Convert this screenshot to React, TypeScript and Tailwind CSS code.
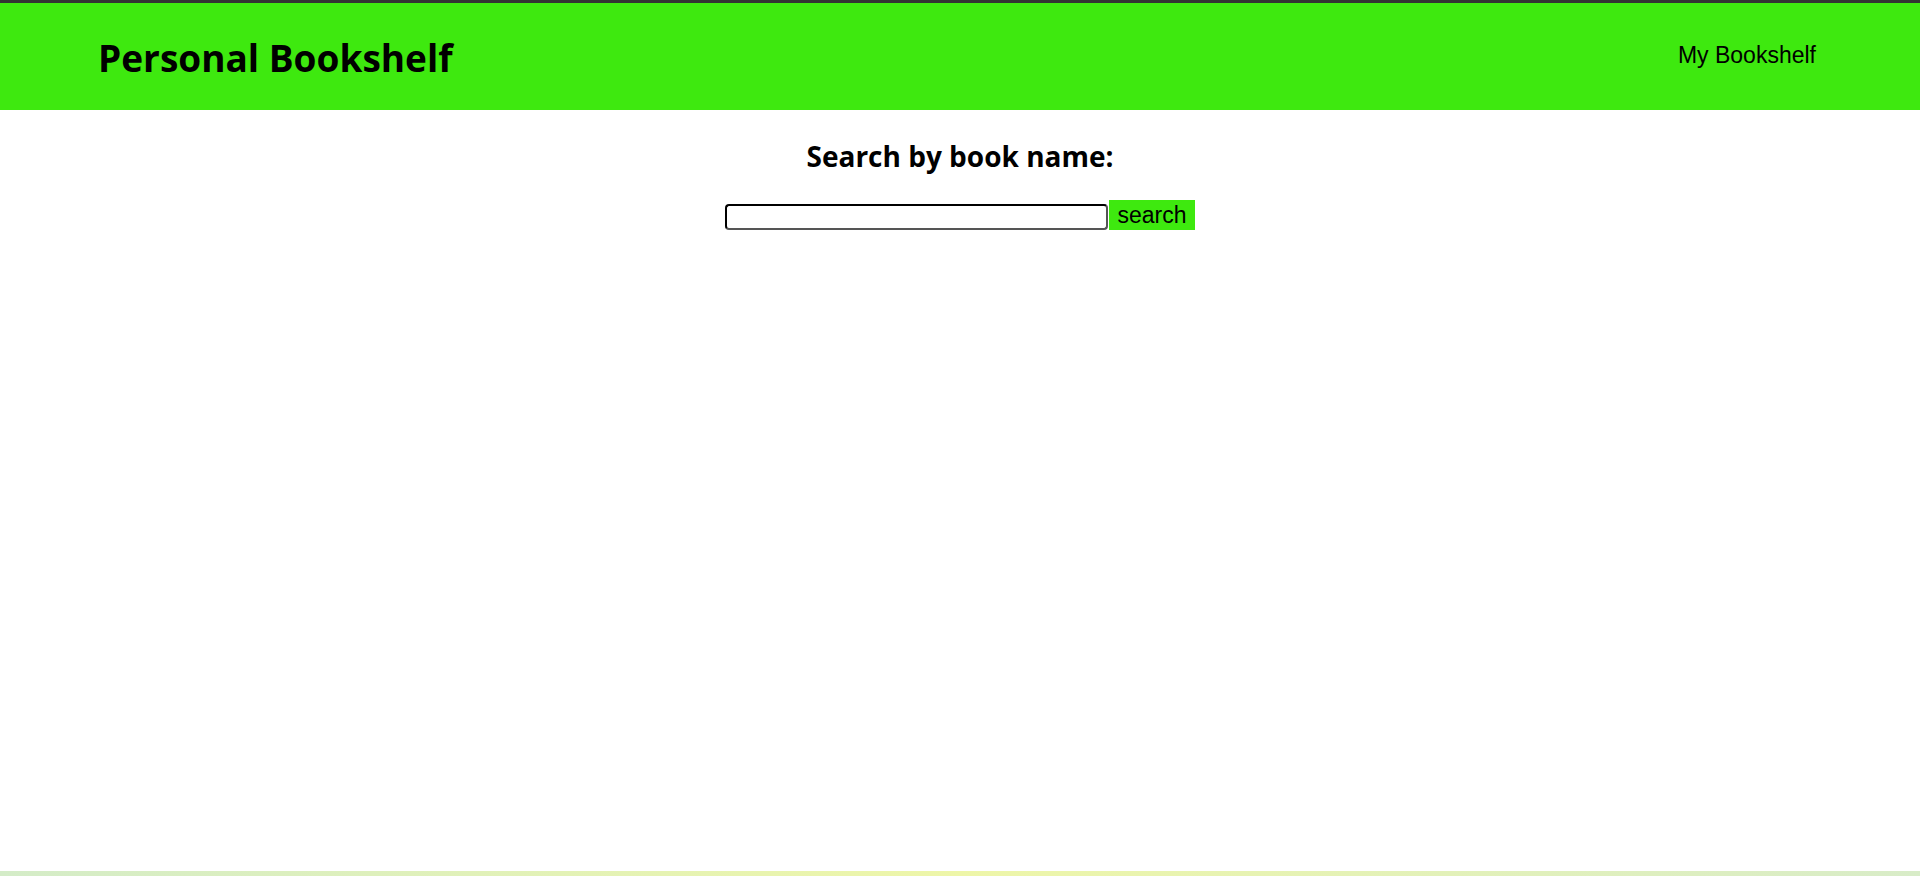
import { useState } from "react";

export default function App() {
    const [query, setQuery] = useState("");

    return (
        <div className="min-h-screen flex flex-col bg-white border-t-[3px] border-[#333333]">
            <header className="h-[107px] bg-[#3ee90f] flex items-center justify-between pl-[98px] pr-[104px]">
                <h1 className="font-['Open_Sans',sans-serif] font-bold text-[37px] text-black leading-none mt-[2px]">
                    Personal Bookshelf
                </h1>
                <a href="#" className="font-['Liberation_Sans',Arial,sans-serif] text-[23px] text-black mb-[2px]">
                    My Bookshelf
                </a>
            </header>

            <main className="flex-1 flex flex-col items-center">
                <h2 className="font-['Open_Sans',sans-serif] font-bold text-[28px] text-black mt-[32px] leading-none">
                    Search by book name:
                </h2>
                <form className="flex items-end mt-[30px]" onSubmit={(e) => e.preventDefault()}>
                    <input
                        type="text"
                        value={query}
                        onChange={(e) => setQuery(e.target.value)}
                        className="w-[383px] h-[26px] border-2 border-black border-b-[#555555] border-r-[#555555] rounded-[4px] bg-white outline-none px-1"
                    />
                    <button
                        type="submit"
                        className="w-[86px] h-[30px] bg-[#3ee90f] text-black font-['Liberation_Sans',Arial,sans-serif] text-[23px] leading-none ml-[1px]"
                    >
                        search
                    </button>
                </form>
            </main>

            <div className="h-[5px] bg-gradient-to-r from-[#d4ecc8] via-[#eef6a8] to-[#d8ecc8]" />
        </div>
    );
}
